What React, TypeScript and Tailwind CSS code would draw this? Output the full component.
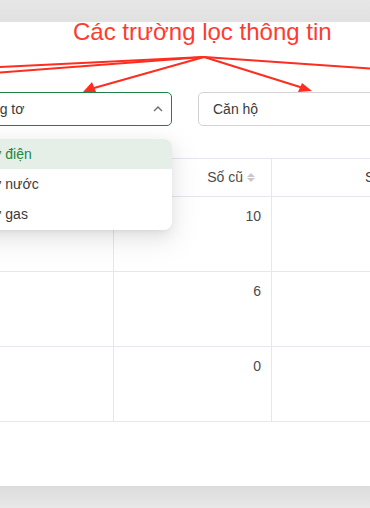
import React from "react";

const rows = [{ old: "10" }, { old: "6" }, { old: "0" }];
const options = ["Công tơ điện", "Công tơ nước", "Công tơ gas"];

const SortIcon = () => (
  <span className="ml-[4px] inline-flex flex-col items-center gap-[1px]">
    <svg width="8" height="4" viewBox="0 0 8 4">
      <path d="M0 4 L4 0 L8 4 Z" fill="#c7c7cc" />
    </svg>
    <svg width="8" height="4" viewBox="0 0 8 4">
      <path d="M0 0 L4 4 L8 0 Z" fill="#c7c7cc" />
    </svg>
  </span>
);

const Arrows = () => (
  <svg
    className="pointer-events-none absolute left-0 top-0"
    width="370"
    height="100"
    viewBox="0 0 370 100">
    <g stroke="#ff2d1f" strokeWidth="2" fill="none" strokeLinecap="round">
      <line x1="204" y1="35" x2="-20" y2="46" />
      <line x1="204" y1="35" x2="-20" y2="52" />
      <line x1="204" y1="35" x2="390" y2="48" />
      <line x1="204" y1="35" x2="94" y2="66" />
      <line x1="204" y1="35" x2="300" y2="65" />
    </g>
    <path d="M83 70 L92 60 L96 70 Z" fill="#ff2d1f" />
    <path d="M312 69 L298 70 L302 61 Z" fill="#ff2d1f" />
  </svg>
);

export default function App() {
  return (
    <div
      className="flex h-[508px] w-[370px] flex-col overflow-hidden bg-white"
      style={{ fontFamily: '"Liberation Sans", Arial, sans-serif' }}>
      <div className="h-[22px] shrink-0 bg-gradient-to-b from-[#e6e6e6] to-[#e1e1e1]" />

      <div className="relative h-[464px] shrink-0 overflow-hidden bg-white pt-[3px]">
        <div className="pl-[73px] text-[24px] leading-[14px] text-[#ff3b30]">
          Các trường lọc thông tin
        </div>

        <div className="ml-[-41px] mt-[53px] flex gap-[26px]">
          <div className="flex h-[34px] w-[213px] shrink-0 items-center justify-between rounded-[5px] border border-[#1f8146] px-[14px] text-[14px] text-[#3a3a3c]">
            <span>Công tơ</span>
            <svg width="10" height="6" viewBox="0 0 10 6" className="mr-[-6px]">
              <path d="M1 5 L5 1 L9 5" stroke="#6b6b70" strokeWidth="1.4" fill="none" />
            </svg>
          </div>
          <div className="flex h-[34px] w-[220px] shrink-0 items-center rounded-[5px] border border-[#d2d2d7] px-[14px] text-[14px] text-[#3a3a3c]">
            Căn hộ
          </div>
        </div>

        <div className="ml-[-60px] mt-[32px] grid grid-cols-[174px_158px_200px] border-t border-[#e6e6ee] text-[14px] text-[#4a4a4e]">
          <div className="h-[38px] border-b border-r border-[#e6e6ee]" />
          <div className="flex h-[38px] items-center justify-end border-b border-r border-[#e6e6ee] pr-[16px]">
            Số cũ
            <SortIcon />
          </div>
          <div className="flex h-[38px] items-center border-b border-[#e6e6ee] pl-[93px] text-[#3a3a3c]">
            Số mới
            <SortIcon />
          </div>
          {rows.map((r, i) => (
            <React.Fragment key={i}>
              <div className="h-[75px] border-b border-r border-[#e6e6ee]" />
              <div className="h-[75px] border-b border-r border-[#e6e6ee] pr-[10px] pt-[9px] text-right leading-[20px]">
                {r.old}
              </div>
              <div className="h-[75px] border-b border-[#e6e6ee]" />
            </React.Fragment>
          ))}
        </div>

        <div className="absolute left-[-61px] top-[117px] w-[233px] overflow-hidden rounded-lg bg-white pb-[1px] text-[14px] shadow-[0_6px_16px_0_rgba(0,0,0,0.08),0_3px_6px_-4px_rgba(0,0,0,0.12),0_9px_28px_8px_rgba(0,0,0,0.05)]">
          {options.map((o, i) => (
            <div
              key={o}
              className={
                i === 0
                  ? "flex h-[30px] items-center bg-[#e5efe8] px-[12px] text-[#23853f]"
                  : "flex h-[30px] items-center px-[12px] text-[#3a3a3c]"
              }>
              {o}
            </div>
          ))}
        </div>

        <Arrows />
      </div>

      <div className="h-[22px] shrink-0 bg-gradient-to-b from-[#dcdcdc] to-[#e8e8e8]" />
    </div>
  );
}
